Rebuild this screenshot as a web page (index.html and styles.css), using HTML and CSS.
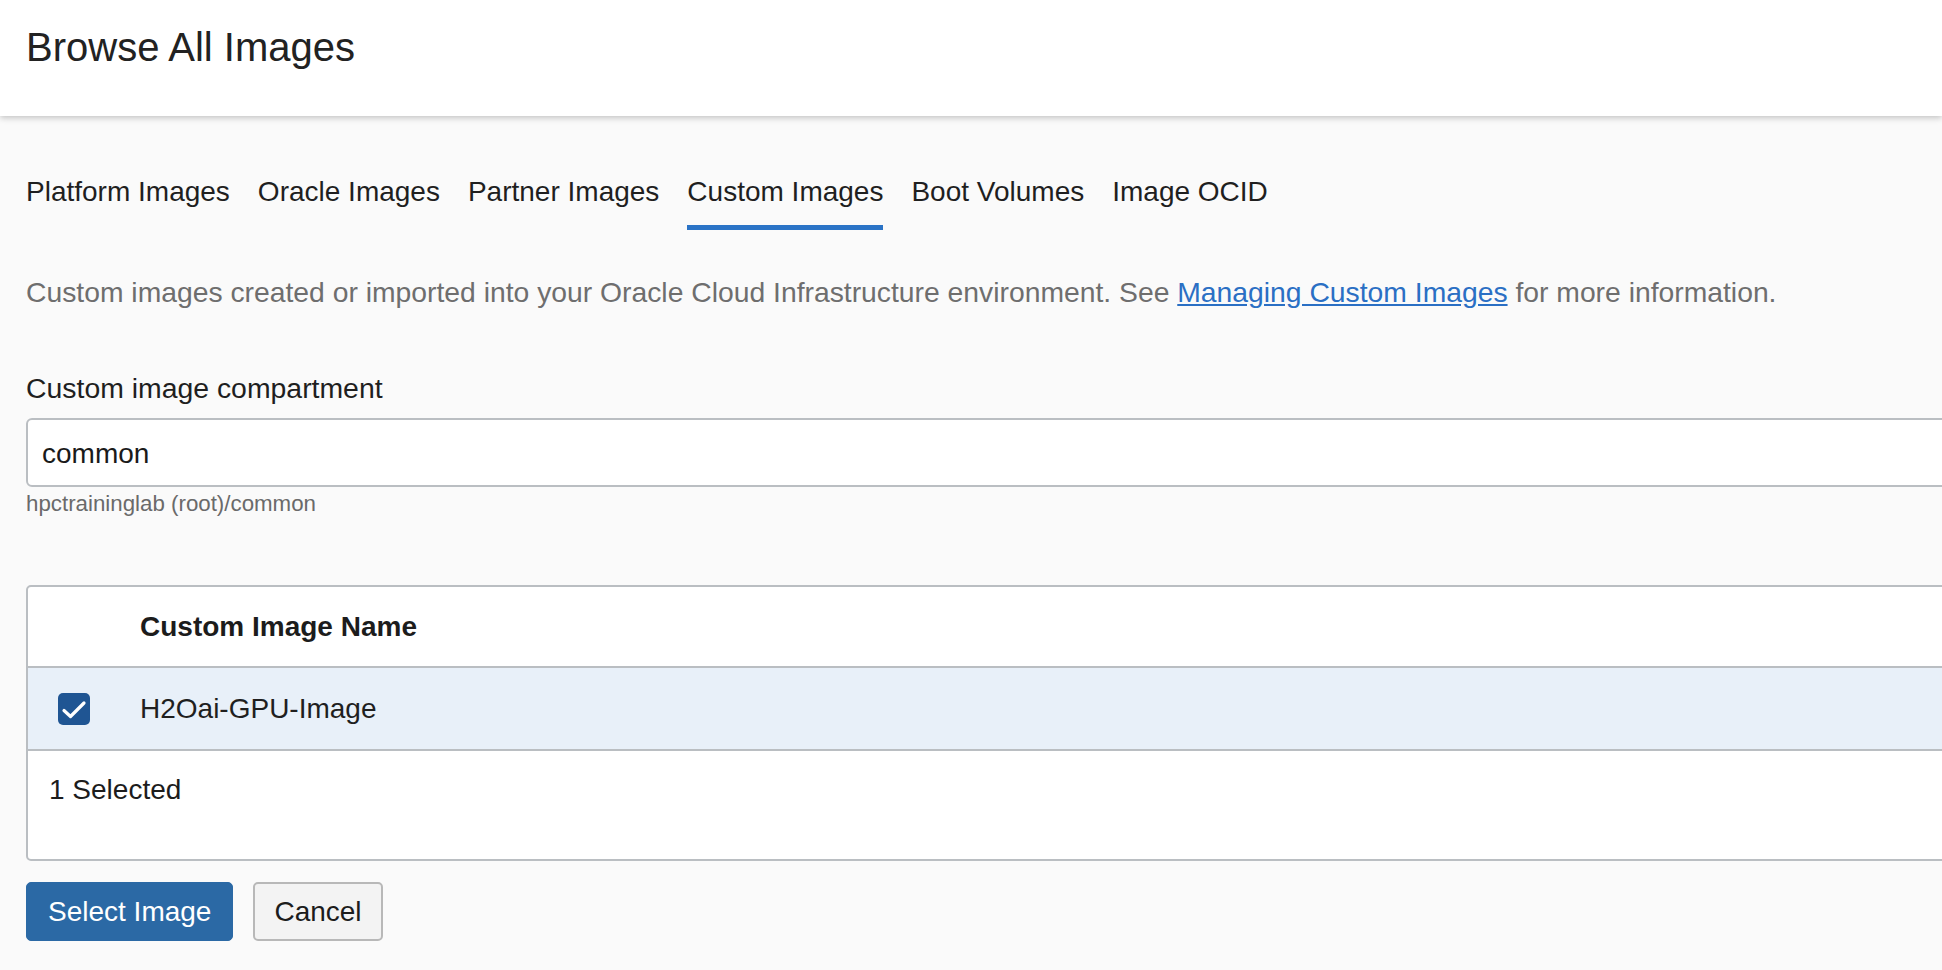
FILE: index.html
```html
<!DOCTYPE html>
<html lang="en">
<head>
<meta charset="utf-8">
<title>Browse All Images</title>
<link rel="stylesheet" href="styles.css">
</head>
<body>
<header class="page-header">
  <h1 class="title">Browse All Images</h1>
</header>
<main class="content">
  <nav class="tabs">
    <a class="tab">Platform Images</a>
    <a class="tab">Oracle Images</a>
    <a class="tab">Partner Images</a>
    <a class="tab active">Custom Images</a>
    <a class="tab">Boot Volumes</a>
    <a class="tab">Image OCID</a>
  </nav>
  <p class="description">Custom images created or imported into your Oracle Cloud Infrastructure environment. See <a class="link" href="#">Managing Custom Images</a> for more information.</p>
  <label class="field-label">Custom image compartment</label>
  <div class="select-box">common</div>
  <div class="helper">hpctraininglab (root)/common</div>
  <div class="table">
    <div class="table-head">
      <div class="cell-check"></div>
      <div class="cell-name">Custom Image Name</div>
    </div>
    <div class="table-row selected">
      <div class="cell-check">
        <span class="checkbox">
          <svg width="32" height="32" viewBox="0 0 32 32"><path d="M6 17.5 L12.5 23.5 L26 10" fill="none" stroke="#fff" stroke-width="3.2" stroke-linecap="round" stroke-linejoin="round"/></svg>
        </span>
      </div>
      <div class="cell-name">H2Oai-GPU-Image</div>
    </div>
    <div class="table-foot">1 Selected</div>
  </div>
  <div class="actions">
    <button class="btn btn-primary">Select Image</button>
    <button class="btn btn-default">Cancel</button>
  </div>
</main>
</body>
</html>
```

FILE: styles.css
```css
html, body {
  margin: 0;
  padding: 0;
  overflow: hidden;
}
body {
  background: #fafafa;
  font-family: "Liberation Sans", Arial, sans-serif;
  color: #1f1f1f;
  height: 970px;
}
.page-header {
  height: 116px;
  background: #ffffff;
  box-shadow: 0 2px 6px rgba(0, 0, 0, 0.22);
  padding: 28px 0 0 26px;
  box-sizing: border-box;
  position: relative;
  z-index: 1;
}
.title {
  margin: 0;
  font-size: 40px;
  line-height: 39px;
  font-weight: normal;
  color: #222;
}
.content {
  width: 2000px;
  padding-left: 26px;
  box-sizing: border-box;
}
.tabs {
  display: flex;
  gap: 28px;
  padding-top: 62px;
}
.tab {
  font-size: 28px;
  line-height: 28px;
  padding-bottom: 19px;
  border-bottom: 5px solid transparent;
  color: #1f1f1f;
}
.tab.active {
  border-bottom-color: #2a73c6;
}
.description {
  margin: 48px 0 0;
  font-size: 28.3px;
  line-height: 28px;
  color: #6e6e6e;
}
.link {
  color: #2a6fc4;
  text-decoration: underline;
}
.field-label {
  display: block;
  margin-top: 68px;
  font-size: 28.4px;
  line-height: 28px;
  color: #1f1f1f;
}
.select-box {
  margin-top: 16px;
  height: 69px;
  box-sizing: border-box;
  border: 2px solid #babec2;
  border-radius: 6px;
  background: #ffffff;
  display: flex;
  align-items: center;
  padding: 3px 14px 0;
  font-size: 28px;
  line-height: 28px;
  color: #1a1a1a;
}
.helper {
  margin-top: 6px;
  font-size: 22.3px;
  line-height: 22px;
  color: #6a6a6a;
}
.table {
  margin-top: 70px;
  border: 2px solid #babec2;
  border-radius: 5px;
  background: #ffffff;
}
.table-head,
.table-row {
  display: flex;
  align-items: center;
  height: 81px;
  border-bottom: 2px solid #babec2;
  box-sizing: border-box;
  font-size: 28px;
  line-height: 28px;
}
.table-head {
  height: 81px;
  font-weight: bold;
  color: #1c1c1c;
}
.table-row.selected {
  background: #e8f0f9;
  height: 83px;
}
.cell-check {
  width: 112px;
  padding-left: 30px;
  box-sizing: border-box;
  display: flex;
  align-items: center;
}
.checkbox {
  width: 32px;
  height: 32px;
  border-radius: 5px;
  background: #1f5593;
  display: flex;
  align-items: center;
  justify-content: center;
}
.table-foot {
  height: 108px;
  box-sizing: border-box;
  padding: 25px 0 0 21px;
  font-size: 28px;
  line-height: 28px;
  color: #1c1c1c;
}
.actions {
  display: flex;
  gap: 20px;
  margin-top: 21px;
}
.btn {
  height: 59px;
  padding: 0 21px;
  font-family: "Liberation Sans", Arial, sans-serif;
  font-size: 28px;
  border-radius: 5px;
  box-sizing: border-box;
}
.btn-primary {
  background: #2b69a5;
  color: #ffffff;
  border: 1px solid #2b69a5;
}
.btn-default {
  background: #f3f3f3;
  color: #1c1c1c;
  border: 2px solid #b8b8b8;
  padding: 0 19px;
}
```
